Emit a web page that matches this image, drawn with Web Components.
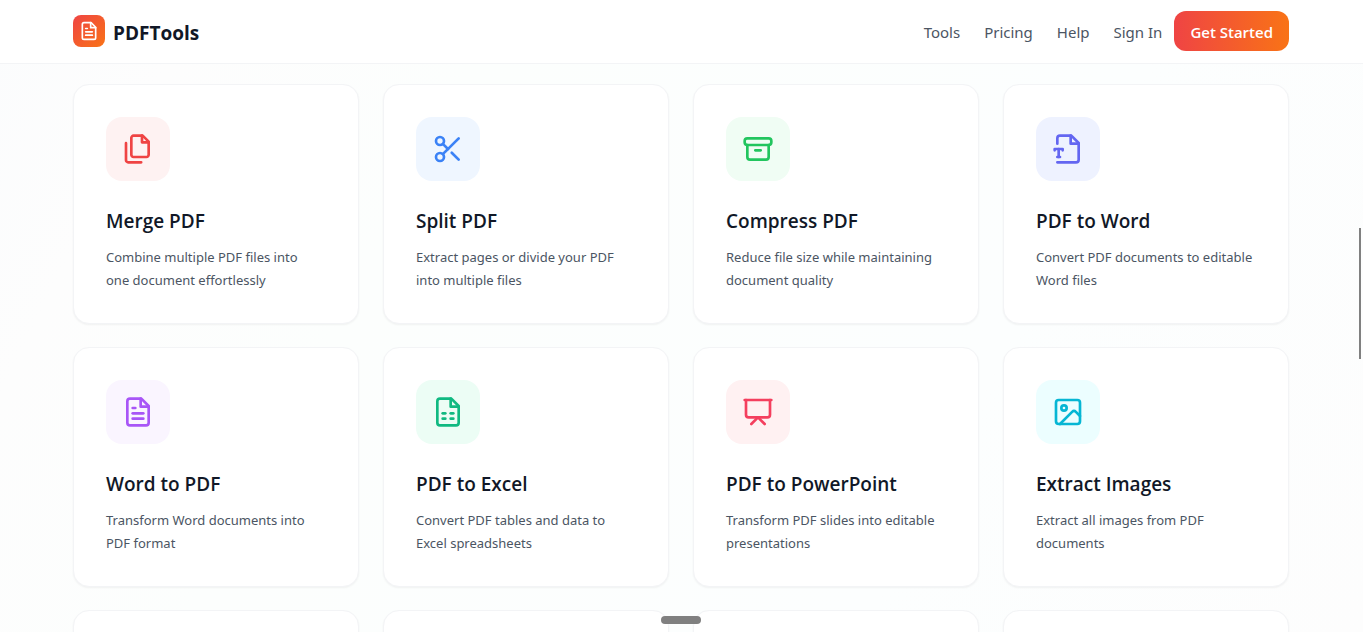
<!DOCTYPE html>
<html lang="en">
<head>
<meta charset="utf-8">
<meta name="viewport" content="width=device-width, initial-scale=1">
<title>PDFTools</title>
<style>
  body {
    --text-font: "Noto Sans", "Open Sans", sans-serif;
    margin: 0;
    padding-right: 1px;
    height: 100vh;
    overflow: hidden;
    box-sizing: border-box;
    background: linear-gradient(117deg, #fbfcfd, #fdfdfd 12%, #fcfefd 30%, #fcfefe 70%, #fdfdfd);
    color: #111827;
    font-family: "Open Sans", "Noto Sans", sans-serif;
  }
</style>
</head>
<body>
<site-header>
  <nav-link href="#tools">Tools</nav-link>
  <nav-link href="#pricing">Pricing</nav-link>
  <nav-link href="#help">Help</nav-link>
</site-header>
<tool-grid>
  <tool-card icon="files" color="#ef4444" tint="#fef2f2" name="Merge PDF">Combine multiple PDF files into<br>one document effortlessly</tool-card>
  <tool-card icon="scissors" color="#3b82f6" tint="#eff6ff" name="Split PDF">Extract pages or divide your PDF into multiple files</tool-card>
  <tool-card icon="archive" color="#22c55e" tint="#f0fdf4" name="Compress PDF">Reduce file size while maintaining document quality</tool-card>
  <tool-card icon="file-type" color="#6366f1" tint="#eef2ff" name="PDF to Word">Convert PDF documents to editable Word files</tool-card>
  <tool-card icon="file-text" color="#a855f7" tint="#faf5ff" name="Word to PDF">Transform Word documents into PDF format</tool-card>
  <tool-card icon="file-sheet" color="#10b981" tint="#ecfdf5" name="PDF to Excel">Convert PDF tables and data to Excel spreadsheets</tool-card>
  <tool-card icon="presentation" color="#f43f5e" tint="#fff1f2" name="PDF to PowerPoint">Transform PDF slides into editable presentations</tool-card>
  <tool-card icon="image" color="#06b6d4" tint="#ecfeff" name="Extract Images">Extract all images from PDF documents</tool-card>
  <tool-card></tool-card>
  <tool-card></tool-card>
  <tool-card></tool-card>
  <tool-card></tool-card>
</tool-grid>
<scroll-marks></scroll-marks>

<script>
const page = '<path d="M14.5 2H6a2 2 0 0 0-2 2v16a2 2 0 0 0 2 2h12a2 2 0 0 0 2-2V7.5L14.5 2z"/><path d="M14 2v6h6"/>';

const icons = {
  'files': '<path d="M15.5 2H8.6c-.4 0-.8.2-1.1.5-.3.3-.5.7-.5 1.1v12.8c0 .4.2.8.5 1.1.3.3.7.5 1.1.5h9.8c.4 0 .8-.2 1.1-.5.3-.3.5-.7.5-1.1V6.5L15.5 2z"/><path d="M3 7.6v12.8c0 .4.2.8.5 1.1.3.3.7.5 1.1.5h9.8"/><path d="M15 2v5h5"/>',
  'scissors': '<circle cx="6" cy="6" r="3"/><path d="M8.12 8.12 12 12"/><path d="M20 4 8.12 15.88"/><circle cx="6" cy="18" r="3"/><path d="M14.8 14.8 20 20"/>',
  'archive': '<rect width="20" height="5" x="2" y="4" rx="2"/><path d="M4 9v9a2 2 0 0 0 2 2h12a2 2 0 0 0 2-2V9"/><path d="M10 13h4"/>',
  'file-type': '<path d="M4 22h14a2 2 0 0 0 2-2V7.5L14.5 2H6a2 2 0 0 0-2 2v4"/><path d="M14 2v6h6"/><path d="M2 13v-1h6v1"/><path d="M5 12v6"/><path d="M4 18h2"/>',
  'file-text': page + '<path d="M10 9H8"/><path d="M16 13H8"/><path d="M16 17H8"/>',
  'file-sheet': page + '<path d="M8 13h2"/><path d="M14 13h2"/><path d="M8 17h2"/><path d="M14 17h2"/>',
  'presentation': '<path d="M2 3h20"/><path d="M21 3v11a2 2 0 0 1-2 2H5a2 2 0 0 1-2-2V3"/><path d="m7 21 5-5 5 5"/>',
  'image': '<rect width="18" height="18" x="3" y="3" rx="2"/><circle cx="9" cy="9" r="2"/><path d="m21 15-3.086-3.086a2 2 0 0 0-2.828 0L6 21"/>',
};

class LineIcon extends HTMLElement {
  connectedCallback() {
    if (this.shadowRoot) return;
    this.attachShadow({ mode: 'open' }).innerHTML = `
      <style>
        :host { display: block; width: 32px; height: 32px; }
        svg {
          display: block;
          width: 100%;
          height: 100%;
          fill: none;
          stroke: currentColor;
          stroke-width: 2;
          stroke-linecap: round;
          stroke-linejoin: round;
        }
      </style>
      <svg viewBox="0 0 24 24" aria-hidden="true">${icons[this.getAttribute('name')] || ''}</svg>
    `;
  }
}

class NavLink extends HTMLElement {
  connectedCallback() {
    if (this.shadowRoot) return;
    this.attachShadow({ mode: 'open' }).innerHTML = `
      <style>
        :host { display: block; padding-top: 2px; }
        a {
          color: #4b5563;
          font-family: var(--text-font);
          font-size: 15px;
          line-height: 24px;
          text-decoration: none;
        }
        a:hover { color: #111827; }
      </style>
      <a href="${this.getAttribute('href')}"><slot></slot></a>
    `;
  }
}

const headerTemplate = document.createElement('template');
headerTemplate.innerHTML = `
  <style>
    :host {
      display: block;
      background: #fff;
      border-bottom: 1px solid #f3f4f6;
      margin-right: -1px;
      padding: 0 1px 1px 0;
    }
    .bar {
      display: flex;
      align-items: center;
      justify-content: space-between;
      max-width: 1216px;
      height: 62px;
      margin: 0 auto;
    }
    .brand {
      display: flex;
      align-items: center;
      gap: 8px;
      color: #111827;
      font-size: 19px;
      font-weight: 700;
      line-height: 28px;
      text-decoration: none;
    }
    .name { padding-top: 4px; }
    .mark {
      display: grid;
      place-items: center;
      width: 32px;
      height: 32px;
      border-radius: 8px;
      background: linear-gradient(to bottom right, #ef4444, #f97316);
      color: #fff;
    }
    .mark line-icon { width: 20px; height: 20px; }
    nav, .account { display: flex; align-items: center; }
    nav { gap: 24px; }
    .account { gap: 12px; }
    button {
      height: 40px;
      padding: 2px 16px 0;
      border: 0;
      border-radius: 12px;
      background: linear-gradient(to right, #ef4444, #f97316);
      color: #fff;
      font: 600 15px/24px "Open Sans", "Noto Sans", sans-serif;
      cursor: pointer;
    }
  </style>
  <div class="bar">
    <a class="brand" href="#home"><span class="mark"><line-icon name="file-text"></line-icon></span><span class="name">PDFTools</span></a>
    <nav>
      <slot></slot>
      <div class="account">
        <nav-link href="#sign-in">Sign In</nav-link>
        <button type="button">Get Started</button>
      </div>
    </nav>
  </div>
`;

class SiteHeader extends HTMLElement {
  constructor() {
    super();
    this.attachShadow({ mode: 'open' });
    this.shadowRoot.appendChild(headerTemplate.content.cloneNode(true));
  }
}

class ToolGrid extends HTMLElement {
  constructor() {
    super();
    this.attachShadow({ mode: 'open' }).innerHTML = `
      <style>
        :host { display: block; padding-top: 20px; }
        main {
          display: grid;
          grid-template-columns: repeat(4, minmax(0, 1fr));
          gap: 23px 24px;
          max-width: 1216px;
          margin: 0 auto;
        }
      </style>
      <main><slot></slot></main>
    `;
  }
}

class ToolCard extends HTMLElement {
  connectedCallback() {
    if (this.shadowRoot) return;
    this.attachShadow({ mode: 'open' }).innerHTML = `
      <style>
        :host { display: block; }
        a {
          display: block;
          box-sizing: border-box;
          height: 100%;
          min-height: 240px;
          padding: 32px 32px 31px;
          border: 1px solid #f3f4f6;
          border-radius: 16px;
          background: #fff;
          box-shadow: 0 1px 2px rgba(0, 0, 0, .05);
          color: inherit;
          text-decoration: none;
        }
        .tile {
          display: grid;
          place-items: center;
          width: 64px;
          height: 64px;
          margin-bottom: 25px;
          border-radius: 16px;
        }
        h3 {
          margin: 0 0 10px;
          font-size: 19px;
          font-weight: 600;
          line-height: 30px;
        }
        p {
          margin: 0;
          color: #4b5563;
          font-family: var(--text-font);
          font-size: 13px;
          line-height: 23px;
        }
      </style>
      <a href="#tool"></a>
    `;
    const name = this.getAttribute('name');
    if (!name) return;
    this.shadowRoot.querySelector('a').innerHTML = `
      <div class="tile" style="color: ${this.getAttribute('color')}; background: ${this.getAttribute('tint')}">
        <line-icon name="${this.getAttribute('icon')}"></line-icon>
      </div>
      <h3>${name}</h3>
      <p><slot></slot></p>
    `;
  }
}

// thin scroll thumb on the right, drag handle at the bottom
class ScrollMarks extends HTMLElement {
  constructor() {
    super();
    this.attachShadow({ mode: 'open' }).innerHTML = `
      <style>
        :host { position: fixed; inset: 0 1px 0 0; pointer-events: none; }
        div { position: absolute; background: #808080; }
        .thumb { right: 1px; top: 228px; width: 2px; height: 131px; }
        .handle { left: calc(50% - 20px); bottom: 8px; width: 40px; height: 8px; border-radius: 4px; }
      </style>
      <div class="thumb"></div>
      <div class="handle"></div>
    `;
  }
}

customElements.define('line-icon', LineIcon);
customElements.define('nav-link', NavLink);
customElements.define('site-header', SiteHeader);
customElements.define('tool-grid', ToolGrid);
customElements.define('tool-card', ToolCard);
customElements.define('scroll-marks', ScrollMarks);
</script>
</body>
</html>
